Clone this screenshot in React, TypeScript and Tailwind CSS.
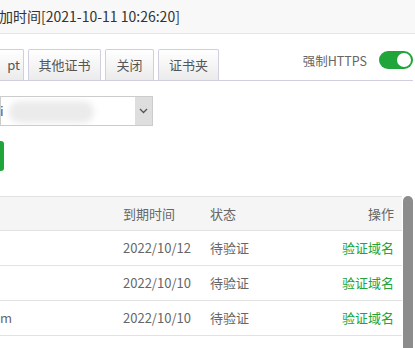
const rows = [
  { name: "", date: "2022/10/12" },
  { name: "", date: "2022/10/10" },
  { name: "m", date: "2022/10/10" },
];

export default function App() {
  return (
    <div className="relative h-[348px] w-[415px] overflow-hidden bg-white font-['Noto_Sans_CJK_SC','Noto_Sans',sans-serif] text-[#666]">
      {/* Title bar */}
      <div className="flex h-[34px] items-center border-b border-[#e6e6e6] bg-[#f8f8f8] pb-[1px] text-[14px] text-[#333]">
        <span className="-ml-[1px]">加时间[2021-10-11 10:26:20]</span>
      </div>

      {/* Tabs */}
      <div className="mt-[15px] flex h-[32px] w-[413px] items-end border-b border-[#cfcfe0]">
        <div className="flex items-end gap-[4px] text-[13px] text-[#555]">
          <div className="-ml-[20px] flex h-[31px] w-[44px] items-center justify-end rounded-t-[2px] border border-b-0 border-[#cfcfe0] bg-gradient-to-b from-white to-[#ebebeb] pr-[3px]">
            pt
          </div>
          <div className="flex h-[31px] w-[73px] items-center justify-center rounded-t-[2px] border border-b-0 border-[#cfcfe0] bg-gradient-to-b from-white to-[#ebebeb]">
            其他证书
          </div>
          <div className="flex h-[31px] w-[49px] items-center justify-center rounded-t-[2px] border border-b-0 border-[#cfcfe0] bg-gradient-to-b from-white to-[#ebebeb]">
            关闭
          </div>
          <div className="flex h-[31px] w-[61px] items-center justify-center rounded-t-[2px] border border-b-0 border-[#cfcfe0] bg-gradient-to-b from-white to-[#ebebeb]">
            证书夹
          </div>
        </div>
        <div className="ml-auto flex h-[31px] items-start self-start pt-[2px]">
          <span className="mt-[1px] text-[12.5px] text-[#666]">强制HTTPS</span>
          <div className="ml-[12px] flex h-[18px] w-[34px] items-center justify-end rounded-full bg-[#20a53a] pr-[2px]">
            <div className="h-[14px] w-[14px] rounded-full bg-white" />
          </div>
        </div>
      </div>

      {/* Select */}
      <div className="mt-[15px] flex h-[30px] w-[153px] items-stretch border border-[#ccc]">
        <div className="relative flex flex-1 items-center overflow-hidden bg-white text-[13px] text-[#555]">
          <span className="-ml-[1px]">i</span>
          <div className="absolute left-[8px] top-[4px] h-[22px] w-[85px] rounded-full bg-[#ebebeb] blur-[3px]" />
        </div>
        <div className="flex w-[17px] items-center justify-center bg-[#dedede]">
          <svg width="9" height="6" viewBox="0 0 9 6" fill="none">
            <path d="M1 1l3.5 3.5L8 1" stroke="#555" strokeWidth="1.3" />
          </svg>
        </div>
      </div>

      {/* Button */}
      <div className="mt-[15px] -ml-[40px] h-[30px] w-[44px] rounded-[3px] bg-[#20a53a]" />

      {/* Table */}
      <div className="mt-[25px] flex">
        <div className="w-[402px] text-[13px]">
          <div className="flex h-[35px] items-center border-y border-[#e2e2e2] bg-[#f5f5f5]">
            <div className="w-[123px]" />
            <div className="w-[87px]">到期时间</div>
            <div className="flex-1">状态</div>
            <div className="pr-[8px]">操作</div>
          </div>
          {rows.map((r, i) => (
            <div key={i} className="flex h-[35px] items-center border-b border-[#e2e2e2]">
              <div className="w-[123px] pl-[0px]">{r.name}</div>
              <div className="w-[87px]">{r.date}</div>
              <div className="flex-1">待验证</div>
              <div className="pr-[8px] text-[#20a53a]">验证域名</div>
            </div>
          ))}
        </div>
        <div className="ml-[1px] h-[160px] w-[10px] rounded-t-[5px] bg-[#8c8c8c]" />
      </div>
    </div>
  );
}
